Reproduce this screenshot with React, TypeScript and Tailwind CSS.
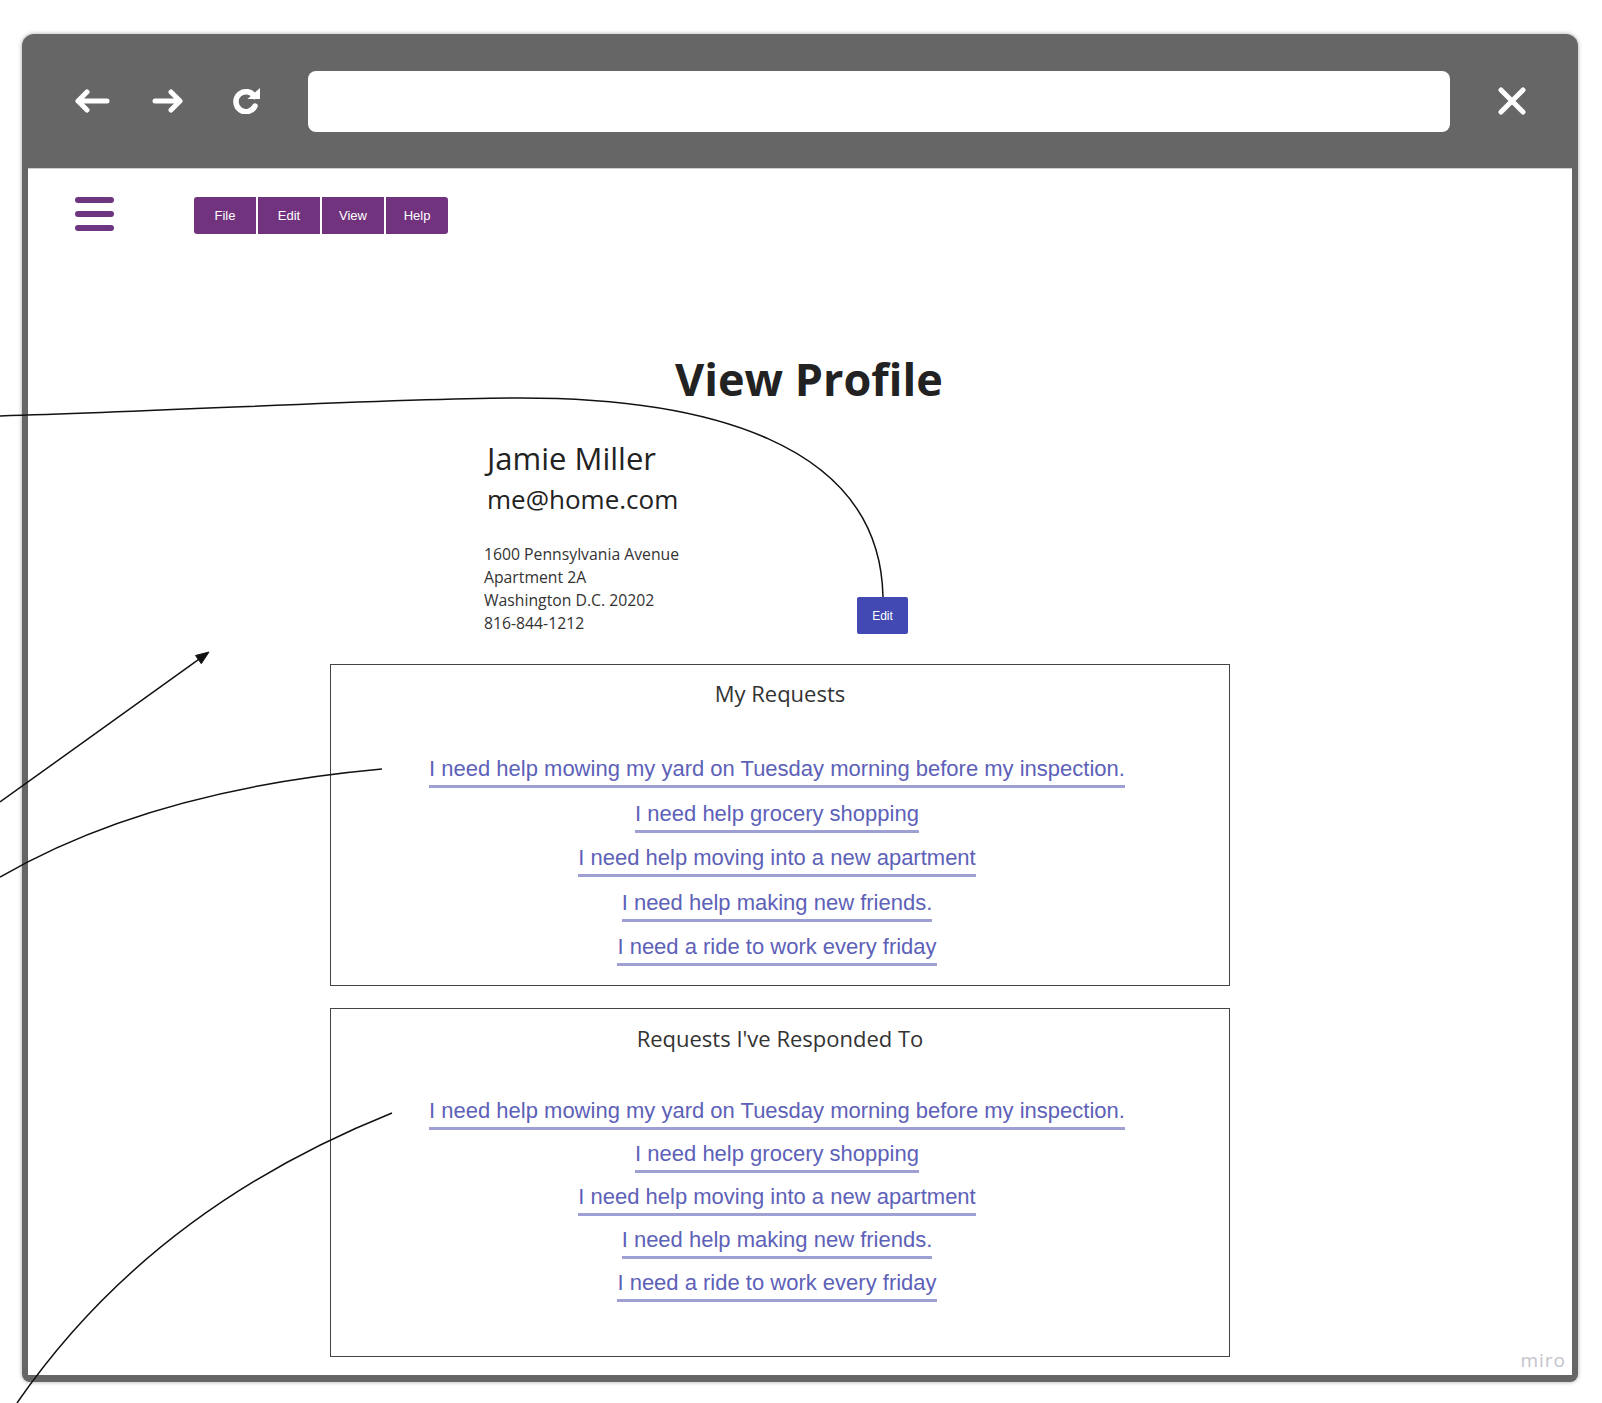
import type { ReactNode } from 'react'

const sans = "font-['Open_Sans',sans-serif]"
const arial = "font-['Liberation_Sans',Arial,sans-serif]"

const requests = [
  'I need help mowing my yard on Tuesday morning before my inspection.',
  'I need help grocery shopping',
  'I need help moving into a new apartment',
  'I need help making new friends.',
  'I need a ride to work every friday',
]

function BackIcon() {
  return (
    <svg width="36" height="24" viewBox="0 0 36 24" fill="none" stroke="white" strokeWidth="5" strokeLinecap="round" strokeLinejoin="round">
      <path d="M33 12H4M13 3L4 12L13 21" />
    </svg>
  )
}

function ForwardIcon() {
  return (
    <svg width="32" height="24" viewBox="0 0 32 24" fill="none" stroke="white" strokeWidth="5" strokeLinecap="round" strokeLinejoin="round">
      <path d="M3 12H28M19 3L28 12L19 21" />
    </svg>
  )
}

function ReloadIcon() {
  return (
    <svg width="32" height="26" viewBox="0 0 32 26">
      <path d="M24.5 8.5 A10 10 0 1 0 25 18" fill="none" stroke="white" strokeWidth="5.5" strokeLinecap="round" />
      <polygon points="17.5,11 30,11 30,0" fill="white" />
    </svg>
  )
}

function CloseIcon() {
  return (
    <svg width="30" height="30" viewBox="0 0 30 30" fill="none" stroke="white" strokeWidth="5" strokeLinecap="round">
      <path d="M4 4L26 26M26 4L4 26" />
    </svg>
  )
}

function MenuButton({ children, className = '' }: { children: ReactNode; className?: string }) {
  return (
    <div className={`w-[62px] h-[37px] bg-[#72337e] text-white text-[13px] flex items-center justify-center ${arial} ${className}`}>
      {children}
    </div>
  )
}

function RequestBox({ title, items, box, linksTop, gap }: { title: string; items: string[]; box: string; linksTop: string; gap: string }) {
  return (
    <div className={`w-[900px] border-[1.5px] border-[#444] ${box}`}>
      <div className={`text-center text-[22px] leading-[28px] text-[#333] ${sans}`}>{title}</div>
      <div className={`flex flex-col items-center pr-[6px] ${linksTop} ${gap}`}>
        {items.map((r) => (
          <span key={r} className={`inline-block text-[22px] leading-[24px] pb-[4px] border-b-[3px] border-[#9ea0d3] text-[#5d61b8] ${arial}`}>
            {r}
          </span>
        ))}
      </div>
    </div>
  )
}

function Annotations() {
  return (
    <svg className="absolute left-0 top-0 pointer-events-none" width="1602" height="1403" viewBox="0 0 1602 1403" fill="none" stroke="#111" strokeWidth="1.5">
      <path d="M0 416 C200 410 400 398 520 398 C700 398 880 440 883 597" />
      <path d="M0 802 L198.4 659.6" />
      <polygon points="209,652 201.3,663.7 195.5,655.5" fill="#111" stroke="#111" strokeWidth="1" />
      <path d="M0 877 Q150 790 382 769" />
      <path d="M392 1113 Q150 1210 17 1403" />
    </svg>
  )
}

export default function App() {
  return (
    <div className="relative w-[1602px] h-[1403px] overflow-hidden bg-white pt-[34px] pl-[22px]">
      <div className="w-[1556px] h-[1348px] bg-[#666] rounded-t-[12px] rounded-b-[8px] flex flex-col shadow-[0_0_4px_rgba(0,0,0,0.35)]">
        {/* title bar */}
        <div className="h-[134px] flex items-center pl-[52px] pr-[51px] shrink-0">
          <BackIcon />
          <div className="ml-[42px]">
            <ForwardIcon />
          </div>
          <div className="ml-[46px]">
            <ReloadIcon />
          </div>
          <div className="ml-[46px] flex-1 h-[61px] bg-white rounded-[8px]" />
          <div className="ml-[47px]">
            <CloseIcon />
          </div>
        </div>

        {/* page */}
        <div className="flex-1 mx-[6px] mb-[7px] bg-white border-t border-[#cfcfcf]">
          <div className="flex items-start pt-[28px] pl-[47px]">
            <div className="flex flex-col gap-[8px]">
              <div className="w-[39px] h-[6px] rounded-full bg-[#6e3580]" />
              <div className="w-[39px] h-[6px] rounded-full bg-[#6e3580]" />
              <div className="w-[39px] h-[6px] rounded-full bg-[#6e3580]" />
            </div>
            <div className="ml-[80px] flex gap-[2px]">
              <MenuButton className="rounded-l-[3px]">File</MenuButton>
              <MenuButton>Edit</MenuButton>
              <MenuButton>View</MenuButton>
              <MenuButton className="rounded-r-[3px]">Help</MenuButton>
            </div>
          </div>

          <div className="ml-[302px] w-[900px]">
            <h1 className={`mt-[117px] pl-[345px] text-[45px] leading-[56px] font-bold text-[#222] ${sans}`}>View Profile</h1>

            <div className="mt-[33px] pl-[152px] flex items-end">
              <div className={`w-[375px] text-[#222] ${sans}`}>
                <div className="pl-[5px] text-[31px] leading-[36px]">Jamie Miller</div>
                <div className="pl-[5px] mt-[7px] text-[26px] leading-[32px]">me@home.com</div>
                <div className="pl-[2px] mt-[28px] text-[15.75px] leading-[23px] text-[#333]">
                  <div>1600 Pennsylvania Avenue</div>
                  <div>Apartment 2A</div>
                  <div>Washington D.C. 20202</div>
                  <div>816-844-1212</div>
                </div>
              </div>
              <button className={`w-[51px] h-[37px] mb-[1px] bg-[#4249b3] text-white text-[12px] rounded-[2px] ${arial}`}>Edit</button>
            </div>

            <RequestBox title="My Requests" items={requests} box="h-[322px] pt-[14px] mt-[29px]" linksTop="mt-[50px]" gap="gap-[13.5px]" />
            <RequestBox title="Requests I've Responded To" items={requests} box="h-[349px] pt-[14.5px] mt-[22px]" linksTop="mt-[47px]" gap="gap-[12px]" />
          </div>
        </div>
      </div>

      <div className={`absolute right-[32px] bottom-[33px] bg-white px-[4px] text-[19px] leading-[20px] tracking-[1px] text-[#c3c3cc] ${sans}`}>miro</div>

      <Annotations />
    </div>
  )
}
